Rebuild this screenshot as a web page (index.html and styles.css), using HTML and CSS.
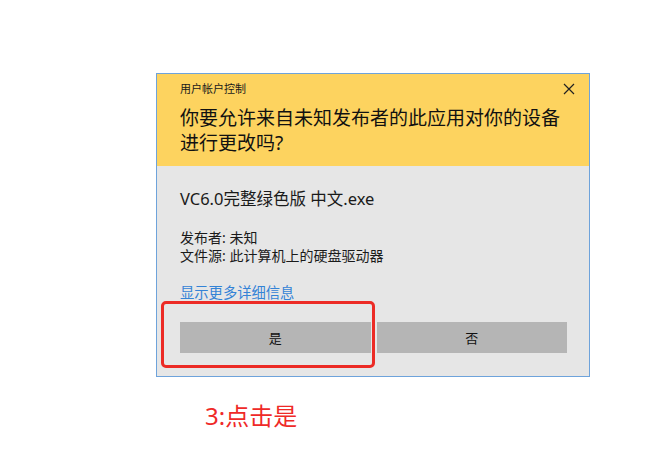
FILE: index.html
```html
<!DOCTYPE html>
<html lang="zh-CN">
<head>
  <meta charset="UTF-8">
  <meta name="viewport" content="width=device-width, initial-scale=1.0">
  <title>用户帐户控制</title>
  <link rel="stylesheet" href="styles.css">
</head>
<body>
  <div class="dialog">
    <div class="header">
      <div class="caption-row">
        <span class="caption">用户帐户控制</span>
        <svg class="close" width="12" height="12" viewBox="0 0 12 12">
          <path d="M1 1L11 11M11 1L1 11" stroke="#222" stroke-width="1.2" fill="none"/>
        </svg>
      </div>
      <h1 class="title">你要允许来自未知发布者的此应用对你的设备进行更改吗?</h1>
    </div>
    <div class="content">
      <p class="file-name">VC6.0完整绿色版 中文.exe</p>
      <div class="details">
        <p>发布者: 未知</p>
        <p>文件源: 此计算机上的硬盘驱动器</p>
      </div>
      <a class="more" href="#">显示更多详细信息</a>
      <div class="buttons">
        <button class="btn">是</button>
        <button class="btn">否</button>
      </div>
      <div class="highlight"></div>
    </div>
  </div>
  <p class="step">3:点击是</p>
</body>
</html>
```

FILE: styles.css
```css
body {
  margin: 0;
  background: #fff;
  font-family: "Noto Sans", "Noto Sans CJK SC", sans-serif;
  color: #1a1a1a;
}
.dialog {
  width: 432px;
  margin: 73px 0 0 156px;
  border: 1px solid #6ea3db;
}
.header {
  background: #fdd35f;
  padding: 6px 22px 10px 23px;
}
.caption-row {
  display: flex;
  justify-content: space-between;
  align-items: center;
  height: 18px;
}
.caption {
  font-size: 11px;
  line-height: 18px;
}
.close {
  margin-right: -8px;
}
.title {
  margin: 8px 0 0;
  font-size: 19px;
  font-weight: normal;
  line-height: 25px;
  color: #111;
}
.content {
  position: relative;
  background: #e6e6e6;
  padding: 22px 22px 23px 23px;
}
.content p {
  margin: 0;
}
.file-name {
  font-size: 16.5px;
  line-height: 22px;
}
.details {
  margin-top: 19px;
  font-size: 14px;
  line-height: 18px;
}
.more {
  display: block;
  margin-top: 19px;
  font-size: 14.3px;
  line-height: 18px;
  color: #3483d6;
  text-decoration: none;
}
.buttons {
  display: flex;
  gap: 6px;
  margin-top: 20px;
}
.btn {
  flex: 1;
  height: 31px;
  border: none;
  background: #b5b5b5;
  font-family: inherit;
  font-size: 13px;
  color: #111;
}
.highlight {
  position: absolute;
  left: 4px;
  top: 135px;
  width: 208px;
  height: 61px;
  border: 3px solid #ec2b25;
  border-radius: 5px;
}
.step {
  margin: 24px 0 0 205px;
  font-size: 24px;
  line-height: 30px;
  color: #ef2a28;
}
```
